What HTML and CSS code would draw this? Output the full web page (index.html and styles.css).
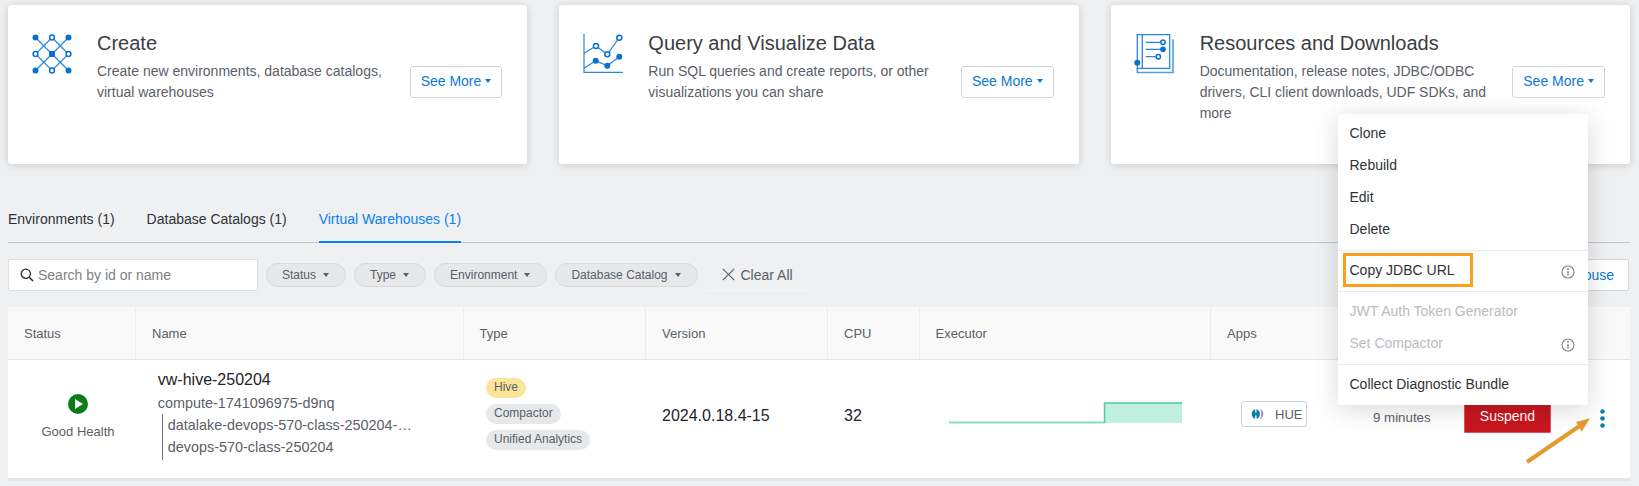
FILE: index.html
```html
<!DOCTYPE html>
<html lang="en">
  <head>
    <meta charset="UTF-8" />
    <title>Virtual Warehouses</title>
    <link rel="stylesheet" href="styles.css">
  </head>
  <body>
    <div class="page">
      <section class="cards">
        <div class="card">
          <svg class="card-icon" viewBox="0 0 40 40">
            <g fill="none" stroke="#2a86dd" stroke-width="1.2">
              <path d="M3.5 3.5 36.5 36.5M36.5 3.5 3.5 36.5M20 3.5 36.5 20 20 36.5 3.5 20Z" />
            </g>
            <g fill="#0a6fcf">
              <circle cx="3.5" cy="3.5" r="3" />
              <circle cx="36.5" cy="3.5" r="3" />
              <circle cx="3.5" cy="36.5" r="3" />
              <circle cx="36.5" cy="36.5" r="3" />
              <rect x="17" y="17" width="6" height="6" rx="1" />
            </g>
            <g fill="#fff" stroke="#0a6fcf" stroke-width="1.5">
              <circle cx="20" cy="3.5" r="2.4" />
              <circle cx="3.5" cy="20" r="2.4" />
              <circle cx="36.5" cy="20" r="2.4" />
              <circle cx="20" cy="36.5" r="2.4" />
            </g>
          </svg>
          <div class="card-text">
            <h2>Create</h2>
            <p>Create new environments, database catalogs, virtual warehouses</p>
          </div>
          <button class="see-more">See More<i class="caret"></i></button>
        </div>
        <div class="card">
          <svg class="card-icon" viewBox="0 0 40 40">
            <path d="M1 0V38.3H40" fill="none" stroke="#2a86dd" stroke-width="1.2" />
            <path d="M1 19.3 13 12 24.3 20.3 36.3 3.7M1 34.3 12.7 26.7 24.3 31.7 36.3 22.7" fill="none" stroke="#2a86dd" stroke-width="1.2" />
            <g fill="#0a6fcf">
              <circle cx="12.7" cy="26.7" r="3" />
              <circle cx="24.3" cy="31.7" r="3" />
              <circle cx="36.3" cy="22.7" r="3" />
            </g>
            <g fill="#fff" stroke="#0a6fcf" stroke-width="1.5">
              <circle cx="13" cy="12" r="2.5" />
              <circle cx="24.3" cy="20.3" r="2.5" />
              <circle cx="36.3" cy="3.7" r="2.5" />
            </g>
          </svg>
          <div class="card-text">
            <h2>Query and Visualize Data</h2>
            <p>Run SQL queries and create reports, or other visualizations you can share</p>
          </div>
          <button class="see-more">See More<i class="caret"></i></button>
        </div>
        <div class="card">
          <svg class="card-icon" viewBox="0 0 40 40">
            <path d="M2.3 34.3V38.5H38V5.3" fill="none" stroke="#4a9fe0" stroke-width="1.6" />
            <path d="M2.3.7H34.7V34.3H2.3ZM7.3.7V34.3" fill="none" stroke="#2a86dd" stroke-width="1.3" />
            <path d="M10.7 8.3H26M10.7 15.3H27M10.7 22.7H21" fill="none" stroke="#2a86dd" stroke-width="1.2" />
            <circle cx="2.3" cy="28.7" r="3" fill="#0a6fcf" />
            <circle cx="28" cy="15.3" r="2.8" fill="#0a6fcf" />
            <g fill="#fff" stroke="#0a6fcf" stroke-width="1.5">
              <circle cx="28" cy="8.3" r="2.2" />
              <circle cx="23.3" cy="22.7" r="2.2" />
            </g>
          </svg>
          <div class="card-text">
            <h2>Resources and Downloads</h2>
            <p>Documentation, release notes, JDBC/ODBC drivers, CLI client downloads, UDF SDKs, and more</p>
          </div>
          <button class="see-more">See More<i class="caret"></i></button>
        </div>
      </section>

      <nav class="tabs">
        <a class="tab">Environments (1)</a>
        <a class="tab">Database Catalogs (1)</a>
        <a class="tab active">Virtual Warehouses (1)</a>
      </nav>

      <div class="toolbar">
        <label class="search">
          <svg class="search-icon" viewBox="0 0 14 14">
            <circle cx="5.8" cy="5.8" r="4.6" fill="none" stroke="#2a2e33" stroke-width="1.3" />
            <path d="M9.2 9.2 13 13" stroke="#2a2e33" stroke-width="1.6" />
          </svg>
          <input type="text" placeholder="Search by id or name" />
        </label>
        <button class="chip">Status<i class="caret"></i></button>
        <button class="chip">Type<i class="caret"></i></button>
        <button class="chip">Environment<i class="caret"></i></button>
        <button class="chip">Database Catalog<i class="caret"></i></button>
        <button class="clear">
          <svg class="clear-icon" viewBox="0 0 13 13">
            <path d="M.8.8 12.2 12.2M12.2.8.8 12.2" stroke="#5a6068" stroke-width="1.2" />
          </svg>
          Clear All
        </button>
        <button class="add-warehouse">New Virtual Warehouse</button>
      </div>

      <div class="table">
        <div class="row head">
          <div class="th">Status</div>
          <div class="th">Name</div>
          <div class="th">Type</div>
          <div class="th">Version</div>
          <div class="th">CPU</div>
          <div class="th">Executor</div>
          <div class="th">Apps</div>
          <div class="th last"></div>
        </div>
        <div class="row body">
          <div class="td status">
            <svg class="health-icon" viewBox="0 0 20 20">
              <circle cx="10" cy="10" r="10" fill="#0a7d17" />
              <path d="M7 5 15 10 7 15Z" fill="#fff" />
            </svg>
            <span>Good Health</span>
          </div>
          <div class="td name">
            <div class="vw-name">vw-hive-250204</div>
            <div class="vw-id">compute-1741096975-d9nq</div>
            <div class="tree">
              <div>datalake-devops-570-class-250204-…</div>
              <div>devops-570-class-250204</div>
            </div>
          </div>
          <div class="td tags">
            <span class="tag hive">Hive</span>
            <span class="tag">Compactor</span>
            <span class="tag">Unified Analytics</span>
          </div>
          <div class="td big">2024.0.18.4-15</div>
          <div class="td big">32</div>
          <div class="td chart-cell">
            <svg class="chart" viewBox="0 0 233 22">
              <rect x="155" y="1" width="78" height="20" fill="#c1efdf" />
              <path d="M0 20.5H155.5" fill="none" stroke="#86e0c0" stroke-width="2" />
              <path d="M155.5 21V1H233" fill="none" stroke="#52c9a0" stroke-width="1.5" />
            </svg>
          </div>
          <div class="td apps">
            <button class="hue">
              <svg class="hue-icon" viewBox="0 0 13 10">
                <path d="M3 .5C0 3 0 7 3 9.5H4.2V.5Z" fill="#0b7fa8" />
                <path d="M4 3.5H6V6.5H4Z" fill="#0b7fa8" />
                <path d="M5.5 .5H6.8C9.6 3 9.6 7 6.8 9.5H5.5Z" fill="#0b7fa8" />
                <path d="M9.8 .5C12.6 3 12.6 7 9.8 9.5C11 7 11 3 9.8 .5Z" fill="#9a6fc0" stroke="#a97fc8" stroke-width=".8" />
              </svg>
              HUE
            </button>
          </div>
          <div class="td actions">
            <span class="uptime">9 minutes</span>
            <button class="suspend">Suspend</button>
            <svg class="kebab" viewBox="0 0 5 19">
              <circle cx="2.5" cy="2.5" r="2.3" />
              <circle cx="2.5" cy="9.5" r="2.3" />
              <circle cx="2.5" cy="16.5" r="2.3" />
            </svg>
          </div>
        </div>
      </div>

      <div class="menu">
        <div class="menu-group">
          <div class="menu-item">Clone</div>
          <div class="menu-item">Rebuild</div>
          <div class="menu-item">Edit</div>
          <div class="menu-item">Delete</div>
        </div>
        <div class="menu-group">
          <div class="menu-item">
            Copy JDBC URL
            <svg class="info" viewBox="0 0 14 14">
              <circle cx="7" cy="7" r="6" fill="none" stroke="#7d8389" stroke-width="1.1" />
              <path d="M7 6V10.5" stroke="#7d8389" stroke-width="1.3" />
              <circle cx="7" cy="4" r=".9" fill="#7d8389" />
            </svg>
            <span class="highlight"></span>
          </div>
        </div>
        <div class="menu-group">
          <div class="menu-item disabled">JWT Auth Token Generator</div>
          <div class="menu-item disabled">
            Set Compactor
            <svg class="info" viewBox="0 0 14 14">
              <circle cx="7" cy="7" r="6" fill="none" stroke="#7d8389" stroke-width="1.1" />
              <path d="M7 6V10.5" stroke="#7d8389" stroke-width="1.3" />
              <circle cx="7" cy="4" r=".9" fill="#7d8389" />
            </svg>
          </div>
        </div>
        <div class="menu-group">
          <div class="menu-item">Collect Diagnostic Bundle</div>
        </div>
      </div>

      <svg class="arrow" viewBox="0 0 75 56">
        <path d="M7 52 61 15" stroke="#e59a2f" stroke-width="4" />
        <path d="M70 8.3 56 12 61.7 21.7Z" fill="#e59a2f" />
      </svg>
    </div>
  </body>
</html>
```

FILE: styles.css
```css
* {
  box-sizing: border-box;
  font-family: "Liberation Sans", Arial, sans-serif;
}

body {
  margin: 0;
  background-color: #eef0f2;
  color: #5a6068;
}

button {
  font-size: 14px;
  cursor: pointer;
}

.page {
  position: relative;
  width: 1639px;
  height: 486px;
  padding: 5px 9px 0 8px;
  overflow: hidden;
}

.cards {
  display: grid;
  grid-template-columns: repeat(3, 1fr);
  gap: 32px;
}

.card {
  display: flex;
  align-items: flex-start;
  height: 159px;
  padding: 24px 25px 0 24px;
  background-color: #fff;
  border-radius: 3px;
  box-shadow: 0 1px 8px rgba(0, 0, 0, 0.16);
}

.card-icon {
  flex: none;
  width: 40px;
  height: 40px;
  margin: 5px 25px 0 0;
  overflow: visible;
}

.card-text {
  flex: 1;
  padding-right: 22px;
}

.card-text h2 {
  margin: 0 0 4px;
  font-size: 20px;
  font-weight: normal;
  line-height: 28px;
  color: #3a3e43;
}

.card-text p {
  margin: 0;
  font-size: 14px;
  line-height: 21px;
}

.see-more {
  flex: none;
  display: flex;
  align-items: center;
  height: 32px;
  margin-top: 37px;
  padding: 0 10px 2px 10px;
  color: #0a78d8;
  background-color: #fff;
  border: 1px solid #d3d5d8;
  border-radius: 3px;
}

.caret {
  display: inline-block;
  width: 0;
  height: 0;
  margin-left: 4px;
  border-top: 4px solid currentColor;
  border-left: 3.5px solid transparent;
  border-right: 3.5px solid transparent;
}

.tabs {
  display: flex;
  gap: 32px;
  margin-top: 44px;
  border-bottom: 1px solid #c4c6c9;
  height: 35px;
}

.tab {
  height: 35px;
  padding-top: 1px;
  font-size: 14px;
  line-height: 20px;
  color: #2f3338;
}

.tab.active {
  color: #0a80f5;
  border-bottom: 2px solid #0a80f5;
}

.toolbar {
  display: flex;
  align-items: center;
  gap: 8px;
  height: 32px;
  margin-top: 16px;
}

.search {
  display: flex;
  align-items: center;
  width: 250px;
  height: 32px;
  padding-left: 11px;
  background-color: #fff;
  border: 1px solid #dcdee0;
  border-radius: 2px;
}

.search-icon {
  flex: none;
  width: 14px;
  height: 14px;
}

.search input {
  flex: 1;
  min-width: 0;
  margin-left: 4px;
  padding: 0;
  font-size: 14px;
  color: #5a6068;
  border: none;
  outline: none;
}

.search input::placeholder {
  color: #7c8187;
  opacity: 1;
}

.chip {
  display: flex;
  align-items: center;
  height: 24px;
  padding: 0 16px 0 15px;
  font-size: 12px;
  color: #5a6068;
  background-color: #e6e8ea;
  border: 1px solid #d8dadd;
  border-radius: 12px;
}

.chip .caret {
  margin-left: 7px;
}

.clear {
  display: flex;
  align-items: center;
  gap: 6px;
  height: 32px;
  padding: 0 15px 0 16px;
  color: #5a6068;
  background: none;
  border: none;
  border-bottom: 1px solid #f5f6f7;
}

.clear-icon {
  width: 13px;
  height: 13px;
}

.add-warehouse {
  height: 32px;
  margin-left: auto;
  margin-right: 1px;
  padding: 0 14px;
  color: #0a78d8;
  background-color: #fff;
  border: 1px solid #d3d5d8;
  border-radius: 2px;
}

.table {
  margin-top: 16px;
  background-color: #fff;
  border-bottom: 3px solid #e4e5e6;
}

.row {
  display: grid;
  grid-template-columns: 128px 327.5px 182.5px 182px 91.5px 291.5px 147px 1fr;
}

.head {
  height: 53px;
  background-color: #f9f9f9;
  border-bottom: 1px solid #e6e7e8;
}

.th {
  display: flex;
  align-items: center;
  padding-left: 16px;
  font-size: 13px;
  border-right: 1px solid #ececec;
}

.th.last {
  border-right: none;
}

.body {
  height: 118px;
  padding-bottom: 6px;
}

.td {
  display: flex;
  align-items: center;
  padding-left: 16px;
}

.big {
  font-size: 16px;
  color: #1f2328;
}

.status {
  flex-direction: column;
  justify-content: center;
  gap: 10px;
  padding-left: 12px;
  font-size: 13px;
}

.health-icon {
  width: 20px;
  height: 20px;
}

.name {
  display: block;
  padding: 8px 0 0 21.8px;
  font-size: 14.4px;
  line-height: 22px;
}

.vw-name {
  font-size: 16px;
  line-height: 24px;
  color: #1f2328;
}

.tree {
  margin-left: 4px;
  padding: 0 0 2px 5px;
  border-left: 1px solid #6b7077;
}

.tags {
  flex-direction: column;
  align-items: flex-start;
  justify-content: center;
  gap: 6px;
  padding: 0 0 4px 22.5px;
}

.tag {
  height: 20px;
  padding: 0 8px;
  font-size: 12px;
  line-height: 18px;
  background-color: #e7e8ea;
  border-radius: 10px;
}

.tag.hive {
  background-color: #fde49b;
}

.chart-cell {
  padding: 0 0 6px 29.5px;
}

.chart {
  width: 233px;
  height: 22px;
}

.apps {
  padding: 0 0 4px 30px;
}

.hue {
  display: flex;
  align-items: center;
  gap: 11px;
  height: 26px;
  padding: 0 4px 0 9px;
  font-size: 13px;
  color: #5a6068;
  background-color: #fff;
  border: 1px solid #cfd1d4;
  border-radius: 3px;
}

.hue-icon {
  width: 13px;
  height: 10px;
}

.actions {
  padding-left: 15px;
}

.uptime {
  flex: none;
  width: 91px;
  margin-top: 2px;
  font-size: 13.3px;
}

.suspend {
  flex: none;
  width: 87px;
  height: 34px;
  padding: 0;
  color: #fff;
  background-color: #c8161f;
  border: 1px solid #e4505a;
  border-radius: 1px;
}

.kebab {
  flex: none;
  width: 5px;
  height: 19px;
  margin: 4px 0 0 49px;
  fill: #0b7fa8;
}

/* dropdown opened from the row's kebab, lies over the cards and the table */
.menu {
  position: absolute;
  left: 1338px;
  top: 114px;
  width: 250px;
  height: 291px;
  background-color: #fff;
  border-radius: 2px;
  box-shadow: 0 4px 24px rgba(0, 0, 0, 0.16);
}

.menu-group {
  padding: 3px 0 5px;
  border-bottom: 1px solid #e9eaeb;
}

.menu-group:last-child {
  border-bottom: none;
}

.menu-item {
  position: relative;
  display: flex;
  align-items: center;
  justify-content: space-between;
  height: 32px;
  padding: 0 13px 0 11.5px;
  font-size: 14px;
  color: #2f3338;
}

.menu-item.disabled {
  color: #b9bcc0;
}

.info {
  width: 14px;
  height: 14px;
  margin-top: 3px;
}

.highlight {
  position: absolute;
  left: 5px;
  top: -1px;
  width: 130px;
  height: 34px;
  border: 3px solid #f9a11b;
}

.arrow {
  position: absolute;
  left: 1520px;
  top: 410px;
  width: 75px;
  height: 56px;
}
```
